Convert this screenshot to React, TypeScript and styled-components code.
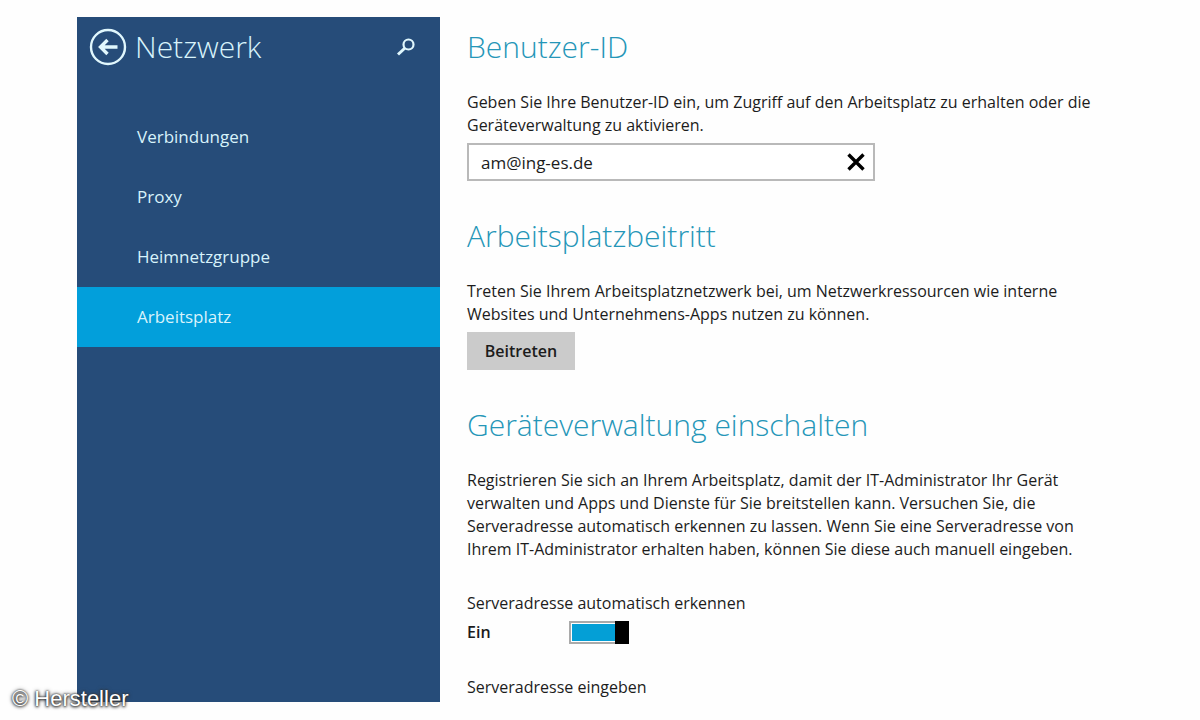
import React, { useState } from "react";
import styled, { createGlobalStyle } from "styled-components";

const GlobalStyle = createGlobalStyle`
  *, *::before, *::after { box-sizing: border-box; }
  body {
    margin: 0;
    background: #fefefe;
    color: #1c1c1c;
    font: 400 16px/23px "Open Sans", "Noto Sans", sans-serif;
  }
  button, input { font: inherit; color: inherit; }
`;

const Page = styled.div`
  position: relative;
  display: grid;
  grid-template-columns: minmax(260px, 363px) minmax(0, 1fr);
  column-gap: 27px;
  min-height: 100vh;
  padding: 17px 24px 18px 77px;
`;

const Sidebar = styled.aside`
  background: #264c79;
  color: #d8f3fb;
`;

const SidebarHeader = styled.header`
  display: flex;
  align-items: center;
  height: 60px;
  padding: 0 24px 0 12px;
`;

const IconButton = styled.button`
  display: flex;
  padding: 0;
  border: 0;
  background: none;
  cursor: pointer;
`;

const SidebarTitle = styled.h1`
  flex: 1;
  margin: 0 0 0 8px;
  font-size: 30px;
  line-height: 44px;
  font-weight: 300;
`;

const Menu = styled.nav`
  display: flex;
  flex-direction: column;
  margin-top: 30px;
`;

const MenuLink = styled.a<{ $active?: boolean }>`
  padding: 0 60px;
  font-size: 17px;
  line-height: 60px;
  color: inherit;
  text-decoration: none;
  background: ${(p) => (p.$active ? "#029fdb" : "transparent")};
`;

const Content = styled.main`
  padding-top: 8px;
`;

const Section = styled.section`
  margin-bottom: 33px;
`;

const Heading = styled.h2`
  margin: 0 0 22px;
  color: #2596b8;
  font-size: 30px;
  line-height: 44px;
  font-weight: 300;
`;

const Text = styled.p`
  display: block;
  margin: 0 0 6px;

  &:last-child {
    margin-bottom: 0;
  }
`;

const Field = styled.div`
  display: flex;
  align-items: center;
  max-width: 408px;
  height: 38px;
  padding: 0 8px 0 12px;
  border: 2px solid #b9b9b9;
  background: #fff;
`;

const FieldInput = styled.input`
  flex: 1;
  min-width: 0;
  padding: 0;
  border: 0;
  outline: 0;
  background: none;
  font-size: 17px;
`;

const JoinButton = styled.button`
  width: 108px;
  height: 38px;
  padding: 0;
  border: 0;
  background: #cbcbcb;
  font-weight: 600;
`;

const Label = styled.label`
  display: block;
`;

const SwitchGroup = styled.div`
  margin: 31px 0 32px;
`;

const SwitchRow = styled.div`
  display: flex;
  align-items: center;
  margin-top: 6px;
`;

const SwitchState = styled.span`
  width: 102px;
  font-weight: 600;
`;

const Switch = styled.input`
  appearance: none;
  display: flex;
  justify-content: flex-start;
  width: 60px;
  height: 23px;
  margin: 0;
  border: 2px solid #aaa;
  background: #aaa;
  box-shadow: inset 0 0 0 1px #fff;

  &::before {
    content: "";
    width: 14px;
    margin: -2px;
    background: #000;
  }

  &:checked {
    justify-content: flex-end;
    background: #049fd6;
  }
`;

const Credit = styled.small`
  position: absolute;
  left: 12px;
  bottom: 9px;
  color: #fff;
  font: 400 22px/24px "Liberation Sans", sans-serif;
  text-shadow: 0 0 2px #222, 0 1px 3px #333, 0 0 4px #555;
`;

const menuItems = ["Verbindungen", "Proxy", "Heimnetzgruppe", "Arbeitsplatz"];

export default function App() {
  const [userId, setUserId] = useState("am@ing-es.de");
  const [autoDetect, setAutoDetect] = useState(true);

  return (
    <>
      <GlobalStyle />
      <Page>
        <Sidebar>
          <SidebarHeader>
            <IconButton aria-label="Zurück">
              <svg width="38" height="38" viewBox="0 0 38 38" fill="none" stroke="#e0f7fd">
                <circle cx="19" cy="19" r="17" strokeWidth="2.4" />
                <path d="M28.5 19H12M18.5 12L11.5 19l7 7" strokeWidth="3.4" />
              </svg>
            </IconButton>
            <SidebarTitle>Netzwerk</SidebarTitle>
            <IconButton aria-label="Suchen">
              <svg width="20" height="20" viewBox="0 0 20 20" fill="none" stroke="#e0f7fd">
                <circle cx="12.5" cy="7.5" r="5" strokeWidth="2.2" />
                <path d="M9 11L2 17.5" strokeWidth="3" />
              </svg>
            </IconButton>
          </SidebarHeader>
          <Menu>
            {menuItems.map((item) => (
              <MenuLink
                key={item}
                href={"#" + item.toLowerCase()}
                $active={item === "Arbeitsplatz"}
                aria-current={item === "Arbeitsplatz" ? "page" : undefined}
              >
                {item}
              </MenuLink>
            ))}
          </Menu>
        </Sidebar>

        <Content>
          <Section>
            <Heading>Benutzer-ID</Heading>
            <Text as="label" htmlFor="user-id">
              Geben Sie Ihre Benutzer-ID ein, um Zugriff auf den Arbeitsplatz zu erhalten oder die
              <br />
              Geräteverwaltung zu aktivieren.
            </Text>
            <Field>
              <FieldInput id="user-id" value={userId} onChange={(e) => setUserId(e.target.value)} />
              <IconButton aria-label="Eingabe löschen" onClick={() => setUserId("")}>
                <svg width="18" height="18" viewBox="0 0 18 18" stroke="#000" strokeWidth="3.4">
                  <path d="M1.5 1.5l15 15M16.5 1.5l-15 15" />
                </svg>
              </IconButton>
            </Field>
          </Section>

          <Section>
            <Heading>Arbeitsplatzbeitritt</Heading>
            <Text>
              Treten Sie Ihrem Arbeitsplatznetzwerk bei, um Netzwerkressourcen wie interne
              <br />
              Websites und Unternehmens-Apps nutzen zu können.
            </Text>
            <JoinButton>Beitreten</JoinButton>
          </Section>

          <Heading>Geräteverwaltung einschalten</Heading>
          <Text>
            Registrieren Sie sich an Ihrem Arbeitsplatz, damit der IT-Administrator Ihr Gerät
            <br />
            verwalten und Apps und Dienste für Sie breitstellen kann. Versuchen Sie, die
            <br />
            Serveradresse automatisch erkennen zu lassen. Wenn Sie eine Serveradresse von
            <br />
            Ihrem IT-Administrator erhalten haben, können Sie diese auch manuell eingeben.
          </Text>
          <SwitchGroup>
            <Label htmlFor="auto-detect">Serveradresse automatisch erkennen</Label>
            <SwitchRow>
              <SwitchState>{autoDetect ? "Ein" : "Aus"}</SwitchState>
              <Switch
                id="auto-detect"
                type="checkbox"
                role="switch"
                checked={autoDetect}
                onChange={(e) => setAutoDetect(e.target.checked)}
              />
            </SwitchRow>
          </SwitchGroup>
          <Text>Serveradresse eingeben</Text>
        </Content>
        <Credit>© Hersteller</Credit>
      </Page>
    </>
  );
}
